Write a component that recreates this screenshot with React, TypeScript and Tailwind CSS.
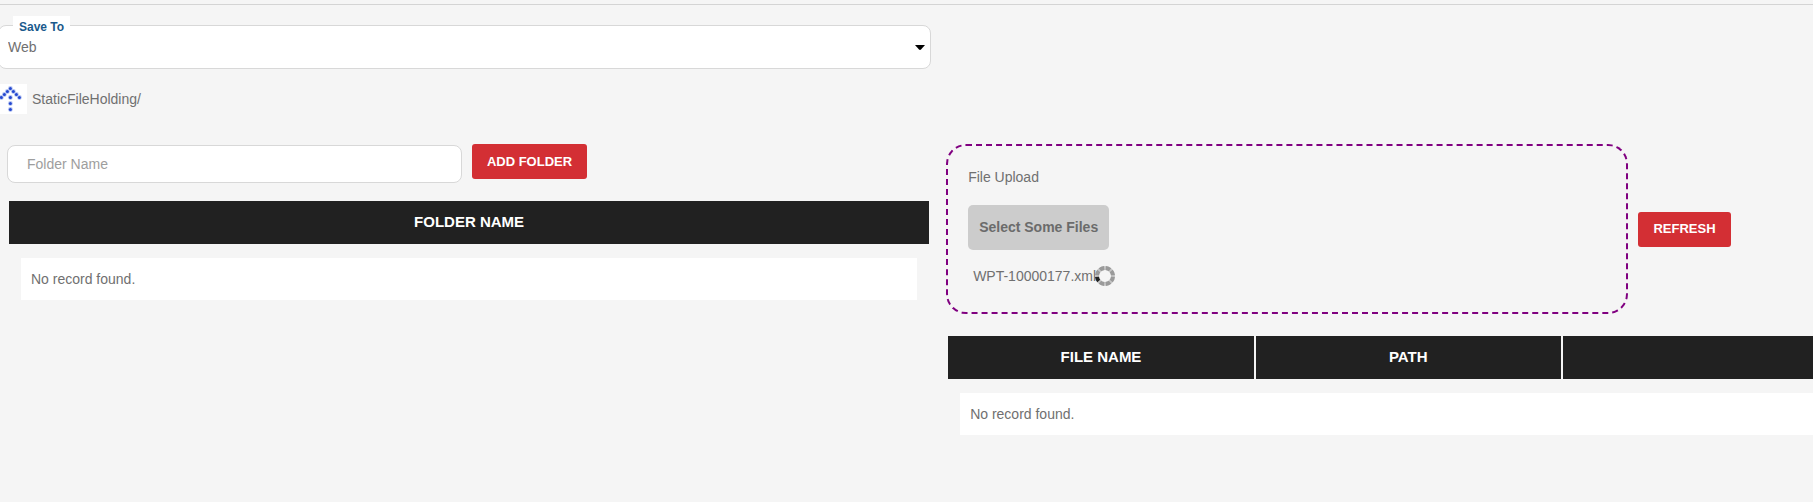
import type { ReactNode } from "react";

const EMPTY_TEXT = "No record found.";
const SPINNER_ANGLES = [0, 45, 90, 135, 180, 225, 270, 315];
const ACTIVE_ANGLE = 225;

const ARROW_DOTS = [
  [10, 4],
  [7, 7],
  [4, 10],
  [1, 13],
  [13, 7],
  [16, 10],
  [19, 13],
  [10, 13],
  [10, 19],
  [10, 25],
];

type RecordTableProps = {
  columns: string[];
};

function RecordTable({ columns }: RecordTableProps) {
  return (
    <table className="w-full table-fixed border-collapse">
      <thead>
        <tr>
          {columns.map((column, index) => (
            <th
              key={index}
              scope="col"
              className="h-[43px] border-l-2 border-[#f5f5f5] bg-[#212121] px-0 pt-0 pb-0.5 text-center text-[15px] font-bold leading-5 text-white first:border-l-0"
            >
              {column}
            </th>
          ))}
        </tr>
      </thead>
      <tbody>
        <tr>
          <td colSpan={columns.length} className="px-3 pt-[14px] pb-0">
            <div className="bg-white px-[10px] py-[11px] leading-5">{EMPTY_TEXT}</div>
          </td>
        </tr>
      </tbody>
    </table>
  );
}

function ActionButton({ children }: { children: ReactNode }) {
  return (
    <button
      type="button"
      className="h-[35px] shrink-0 rounded-[3px] bg-[#d32f34] px-[15px] text-[13px] font-bold leading-5 text-white"
    >
      {children}
    </button>
  );
}

function UpIcon() {
  return (
    <svg viewBox="0 0 27 30" className="h-[30px] w-[27px]" aria-hidden="true">
      <rect width="27" height="30" fill="#fff" />
      {ARROW_DOTS.map(([x, y]) => (
        <circle key={`halo-${x}-${y}`} cx={x + 0.4} cy={y + 0.5} r="2.4" fill="#b9c6f2" />
      ))}
      {ARROW_DOTS.map(([x, y]) => (
        <circle key={`dot-${x}-${y}`} cx={x + 0.4} cy={y + 0.5} r="1.5" fill="#2448d0" />
      ))}
    </svg>
  );
}

function Spinner() {
  return (
    <svg viewBox="-10 -10 20 20" className="-ml-px size-5" aria-label="Uploading" role="img">
      <circle r="8" fill="none" stroke="#c6c6c6" strokeWidth="4" />
      {SPINNER_ANGLES.map((angle) => (
        <path
          key={angle}
          d="M1 -9.9A10 10 0 0 1 6.3 -7.8L3.8 -4.7A6 6 0 0 0 .7 -6Z"
          fill={angle === ACTIVE_ANGLE ? "#222" : "#9a9a9a"}
          transform={`rotate(${angle})`}
        />
      ))}
    </svg>
  );
}

function FolderPanel() {
  return (
    <section className="w-1/2">
      <div className="relative -ml-0.5 mr-2">
        <label
          htmlFor="save-to"
          className="absolute -top-[9px] left-[15px] bg-white px-1.5 pt-px text-xs font-bold leading-5 text-[#1a5a8c]"
        >
          Save To
        </label>
        <select
          id="save-to"
          className="block h-11 w-full appearance-none rounded-lg border border-[#d8d8d8] bg-white pr-8 pl-[9px] leading-5"
        >
          <option>Web</option>
        </select>
        <svg viewBox="0 0 10 5" className="pointer-events-none absolute top-5 right-1.5 h-[5px] w-[10px]" aria-hidden="true">
          <path d="M0 0h10L6 4.6Q5 5.4 4 4.6Z" fill="#000" />
        </svg>
      </div>

      <div className="mt-[15px] flex items-center gap-[5px]">
        <button type="button" aria-label="Up one folder">
          <UpIcon />
        </button>
        <span className="leading-5">StaticFileHolding/</span>
      </div>

      <form className="mt-[30px] flex items-start gap-[10px] pl-[7px]">
        <input
          type="text"
          aria-label="Folder Name"
          placeholder="Folder Name"
          className="mt-px h-[38px] w-[48.8%] rounded-lg border border-[#d8d8d8] bg-white px-[19px] leading-5 placeholder:text-[#9e9e9e]"
        />
        <ActionButton>ADD FOLDER</ActionButton>
      </form>

      <div className="mt-[18px] pr-[10px] pl-[9px]">
        <RecordTable columns={["FOLDER NAME"]} />
      </div>
    </section>
  );
}

function UploadPanel() {
  return (
    <section className="w-1/2 pt-[119px]">
      <div className="flex items-center gap-[10px] pl-[7px]">
        <div className="h-[170px] w-[73.2%] rounded-[20px] border-2 border-dashed border-[purple] px-5 pt-[21px]">
          <p className="leading-5">File Upload</p>
          <button
            type="button"
            className="mt-[18px] block h-[45px] rounded-[5px] bg-[#ccc] px-[11px] pb-0.5 font-bold leading-5 text-[#6b6b6b]"
          >
            Select Some Files
          </button>
          <div className="mt-[15px] flex items-center pl-[5px]">
            <span className="pt-px leading-5">WPT-10000177.xml</span>
            <Spinner />
          </div>
        </div>
        <ActionButton>REFRESH</ActionButton>
      </div>

      <div className="mt-[22px] pr-[10px] pl-[9px]">
        <RecordTable columns={["FILE NAME", "PATH", ""]} />
      </div>
    </section>
  );
}

export default function App() {
  return (
    <main className="min-h-screen overflow-hidden bg-[#f5f5f5] pt-1 font-['Liberation_Sans',Arial,sans-serif] text-sm text-[#707070]">
      <hr className="border-[#d4d4d4]" />
      {/* The two panels run a little past the right edge of the window */}
      <div className="flex w-[103.6%] pt-5">
        <FolderPanel />
        <UploadPanel />
      </div>
    </main>
  );
}
